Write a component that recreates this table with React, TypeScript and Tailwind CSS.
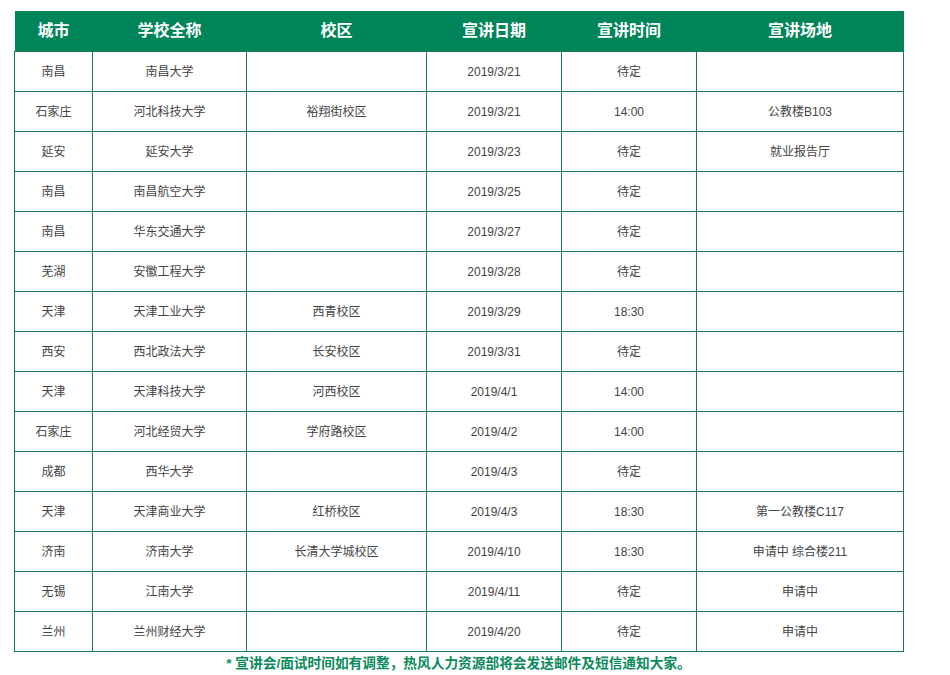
import React from 'react';

interface Row {
  city: string;
  school: string;
  campus: string;
  date: string;
  time: string;
  place: string;
}

const rows: Row[] = [
  { city: '南昌', school: '南昌大学', campus: '', date: '2019/3/21', time: '待定', place: '' },
  { city: '石家庄', school: '河北科技大学', campus: '裕翔街校区', date: '2019/3/21', time: '14:00', place: '公教楼B103' },
  { city: '延安', school: '延安大学', campus: '', date: '2019/3/23', time: '待定', place: '就业报告厅' },
  { city: '南昌', school: '南昌航空大学', campus: '', date: '2019/3/25', time: '待定', place: '' },
  { city: '南昌', school: '华东交通大学', campus: '', date: '2019/3/27', time: '待定', place: '' },
  { city: '芜湖', school: '安徽工程大学', campus: '', date: '2019/3/28', time: '待定', place: '' },
  { city: '天津', school: '天津工业大学', campus: '西青校区', date: '2019/3/29', time: '18:30', place: '' },
  { city: '西安', school: '西北政法大学', campus: '长安校区', date: '2019/3/31', time: '待定', place: '' },
  { city: '天津', school: '天津科技大学', campus: '河西校区', date: '2019/4/1', time: '14:00', place: '' },
  { city: '石家庄', school: '河北经贸大学', campus: '学府路校区', date: '2019/4/2', time: '14:00', place: '' },
  { city: '成都', school: '西华大学', campus: '', date: '2019/4/3', time: '待定', place: '' },
  { city: '天津', school: '天津商业大学', campus: '红桥校区', date: '2019/4/3', time: '18:30', place: '第一公教楼C117' },
  { city: '济南', school: '济南大学', campus: '长清大学城校区', date: '2019/4/10', time: '18:30', place: '申请中 综合楼211' },
  { city: '无锡', school: '江南大学', campus: '', date: '2019/4/11', time: '待定', place: '申请中' },
  { city: '兰州', school: '兰州财经大学', campus: '', date: '2019/4/20', time: '待定', place: '申请中' },
];

const headers = ['城市', '学校全称', '校区', '宣讲日期', '宣讲时间', '宣讲场地'];

export default function App() {
  return (
    <div
      className="w-[950px] h-[675px] bg-white pt-[11px] pl-[14px]"
      style={{ fontFamily: '"Liberation Sans", "Noto Sans CJK SC", sans-serif' }}
    >
      <table className="w-[889px] table-fixed border-collapse">
        <colgroup>
          <col className="w-[78px]" />
          <col className="w-[154px]" />
          <col className="w-[180px]" />
          <col className="w-[135px]" />
          <col className="w-[135px]" />
          <col className="w-[207px]" />
        </colgroup>
        <thead>
          <tr className="bg-[#00845a] h-[40px]">
            {headers.map(h => (
              <th key={h} className="p-0 text-center text-[16px] font-bold text-white">
                {h}
              </th>
            ))}
          </tr>
        </thead>
        <tbody>
          {rows.map((r, i) => (
            <tr key={i} className="h-[40px]">
              {[r.city, r.school, r.campus, r.date, r.time, r.place].map((v, j) => (
                <td
                  key={j}
                  className="p-0 pt-[2px] border border-[#17775f] text-center text-[12px] text-[#444444]"
                >
                  {v}
                </td>
              ))}
            </tr>
          ))}
        </tbody>
      </table>
      <p className="w-[889px] mt-[2px] text-center text-[13.7px] leading-[20px] font-bold text-[#0b8a5c]">
        * 宣讲会/面试时间如有调整，热风人力资源部将会发送邮件及短信通知大家。
      </p>
    </div>
  );
}
